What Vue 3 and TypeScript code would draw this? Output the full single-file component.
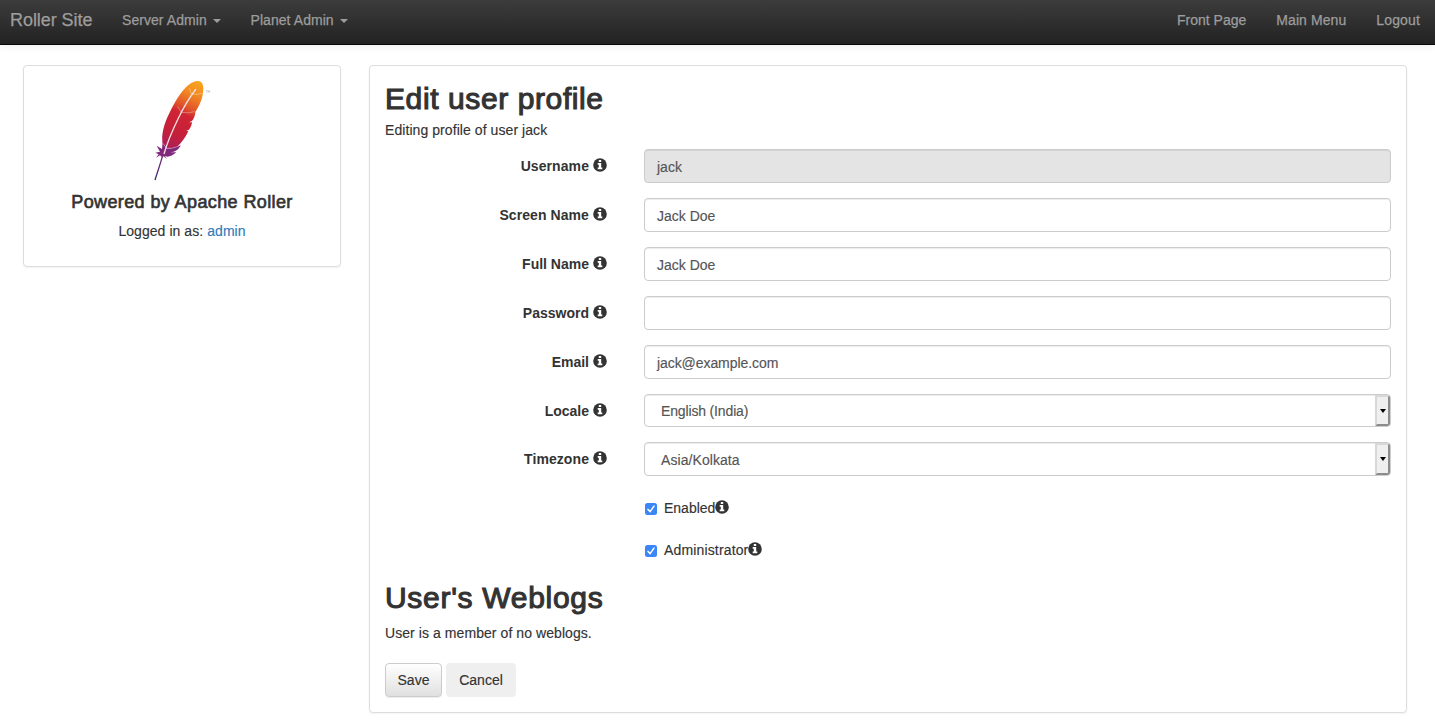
<script setup lang="ts">
import { ref, h } from 'vue'

interface Field {
  id: string
  label: string
  value: string
  kind: 'text' | 'readonly' | 'select'
}

const fields = ref<Field[]>([
  { id: 'username', label: 'Username', value: 'jack', kind: 'readonly' },
  { id: 'screenname', label: 'Screen Name', value: 'Jack Doe', kind: 'text' },
  { id: 'fullname', label: 'Full Name', value: 'Jack Doe', kind: 'text' },
  { id: 'password', label: 'Password', value: '', kind: 'text' },
  { id: 'email', label: 'Email', value: 'jack@example.com', kind: 'text' },
  { id: 'locale', label: 'Locale', value: 'English (India)', kind: 'select' },
  { id: 'timezone', label: 'Timezone', value: 'Asia/Kolkata', kind: 'select' },
])

const flags = ref([
  { id: 'enabled', label: 'Enabled', on: true },
  { id: 'administrator', label: 'Administrator', on: true },
])

const InfoIcon = () =>
  h('svg', { width: 14, height: 14, viewBox: '0 0 14 14' }, [
    h('circle', { cx: 7, cy: 7, r: 6.8, fill: '#333' }),
    h('path', { d: 'M5.8 2h2.4v1.9H5.8zM4.7 5h3.5v4.6h1.1v1.7H4.7V9.6h1.1V6.7H4.7z', fill: '#fff' }),
  ])
</script>

<template>
  <div class="page">
    <nav class="navbar">
      <a class="brand">Roller Site</a>
      <a class="item server">Server Admin <i class="caret"></i></a>
      <a class="item planet">Planet Admin <i class="caret"></i></a>
      <div class="right">
        <a class="item">Front Page</a>
        <a class="item menu">Main Menu</a>
        <a class="item logout">Logout</a>
      </div>
    </nav>

    <div class="columns">
      <aside class="panel side">
        <svg class="feather" width="84" height="116" viewBox="0 0 252 348">
          <defs>
            <linearGradient id="plume" gradientUnits="userSpaceOnUse" x1="178" y1="28" x2="80" y2="235">
              <stop offset="0" stop-color="#f9a51f" />
              <stop offset=".18" stop-color="#f28a22" />
              <stop offset=".38" stop-color="#e0532a" />
              <stop offset=".48" stop-color="#cf2433" />
              <stop offset=".75" stop-color="#c4203b" />
              <stop offset="1" stop-color="#a81f5a" />
            </linearGradient>
            <linearGradient id="quill" gradientUnits="userSpaceOnUse" x1="68" y1="251" x2="45" y2="324">
              <stop offset="0" stop-color="#85287f" />
              <stop offset="1" stop-color="#33256b" />
            </linearGradient>
          </defs>
          <path
            fill="url(#plume)"
            d="M174 27C184 27 190 36 190 50C190 74 180 98 166 120C166 130 162 140 156 147L147 151L156 151C155 160 152 167 147 173L138 177L145 177C139 193 126 210 112 224Q96 231 80 229L68 214C63 190 71 157 88 124C106 85 134 39 162 29Q168 26 174 27Z"
          />
          <path
            fill="#80287c"
            d="M68 207L71 217L80 229Q98 231 123 220C117 230 110 237 101 239L91 241L109 241C100 249 90 254 82 254L74 252L82 261L70 253L66 256L60 250L48 257L56 247L46 242L60 239L50 221L66 231Z"
          />
          <path d="M68 251C62 272 53 299 45 324" fill="none" stroke="url(#quill)" stroke-width="4" />
          <path d="M168 51C148 77 130 107 115 139C99 172 83 207 72 246" fill="none" stroke="#f6e0e2" stroke-width="4" />
          <path d="M149 49L154 66Q170 70 189 63M113 103L124 121Q145 125 164 119M68 213L80 229Q96 231 115 223" fill="none" stroke="#fff" stroke-opacity=".5" stroke-width="2" />
          <path d="M198 56H203M200.5 56V62M205 62V56L207 60L209 56V62" fill="none" stroke="#aaa" stroke-width="1.4" />
        </svg>
        <h4>Powered by Apache Roller</h4>
        <p class="who">Logged in as: <a>admin</a></p>
      </aside>

      <main class="panel main">
        <h2 class="h-edit">Edit user profile</h2>
        <p class="subtitle">Editing profile of user jack</p>

        <form class="form">
          <div v-for="f in fields" :key="f.id" class="row" :class="[f.kind, f.id]">
            <label>{{ f.label }} <InfoIcon class="info" /></label>
            <div class="control">
              <span class="value">{{ f.value }}</span>
              <span v-if="f.kind === 'select'" class="arrow"><i></i></span>
            </div>
          </div>
          <div v-for="c in flags" :key="c.id" class="check">
            <span class="box">
              <svg v-if="c.on" width="12" height="12" viewBox="0 0 12 12">
                <path d="M3 6.4L5.1 8.6L9 3.1" fill="none" stroke="#fff" stroke-width="1.5" stroke-linecap="round" />
              </svg>
            </span>
            <span :class="c.id">{{ c.label }}</span><InfoIcon class="info" />
          </div>
        </form>

        <h2 class="h-weblogs">User's Weblogs</h2>
        <p class="members">User is a member of no weblogs.</p>
        <div class="actions">
          <button class="save">Save</button>
          <button class="cancel">Cancel</button>
        </div>
      </main>
    </div>
  </div>
</template>

<style>
body {
  margin: 0;
  background: #fff;
  overflow: hidden;
}
</style>

<style scoped>
* {
  box-sizing: border-box;
}
.page {
  height: 724px;
  font: 14px/20px 'Liberation Sans', Arial, sans-serif;
  color: #333;
  white-space: nowrap;
  -webkit-text-stroke-width: 0.15px;
}
h2,
h4,
p {
  margin: 0;
  font-weight: 400;
}
.navbar {
  display: flex;
  height: 45px;
  padding: 0 15px 0 10px;
  color: #9d9d9d;
  background: linear-gradient(#3c3c3c, #222);
  border-bottom: 1px solid #080808;
  box-shadow: 0 1px 8px rgba(0, 0, 0, 0.08);
  -webkit-text-stroke-width: 0.25px;
}
.navbar a {
  padding-top: 10px;
}
.brand {
  width: 112px;
  font-size: 18px;
  letter-spacing: -0.06px;
}
.server {
  width: 128.5px;
}
.server,
.planet {
  letter-spacing: 0.06px;
}
.menu {
  letter-spacing: 0.08px;
}
.logout {
  letter-spacing: 0.15px;
}
.caret {
  display: inline-block;
  margin-left: 2px;
  vertical-align: middle;
  border: 4px solid transparent;
  border-top-color: #9d9d9d;
  border-bottom: 0;
}
.right {
  display: flex;
  gap: 30px;
  margin-left: auto;
}
.columns {
  display: flex;
  align-items: flex-start;
  gap: 28px;
  padding: 20px 28px 0 23px;
}
.panel {
  background: #fff;
  border: 1px solid #ddd;
  border-radius: 4px;
  box-shadow: 0 1px 2px rgba(0, 0, 0, 0.05);
}
.side {
  display: flex;
  flex-direction: column;
  align-items: center;
  width: 318px;
  height: 202px;
  padding-top: 6px;
}
.feather {
  display: block;
}
h4 {
  margin-top: 4px;
  font-size: 18px;
  line-height: 20px;
  letter-spacing: 0.39px;
  -webkit-text-stroke-width: 0.65px;
}
.who {
  margin-top: 9px;
  letter-spacing: 0.06px;
}
.who a {
  color: #337ab7;
}
.main {
  flex: 1;
  height: 648px;
  padding: 16px 15px 0;
}
h2 {
  font-size: 30px;
  line-height: 33px;
  -webkit-text-stroke-width: 1.1px;
}
.h-edit {
  letter-spacing: 0.6px;
}
.subtitle {
  margin-top: 5px;
  letter-spacing: 0.07px;
}
.form {
  padding-top: 9px;
}
.row {
  display: flex;
  height: 34px;
  margin-bottom: 15px;
}
.row.locale {
  height: 33px;
}
label {
  display: flex;
  justify-content: flex-end;
  gap: 4px;
  width: 222px;
  padding-top: 7px;
  font-weight: 700;
  -webkit-text-stroke-width: 0;
}
.username label,
.screenname label,
.timezone label {
  letter-spacing: 0.08px;
}
.info {
  flex: none;
  margin-top: 2px;
}
.control {
  display: flex;
  width: 747px;
  margin-left: 37px;
  padding: 7px 0 0 12px;
  color: #555;
  border: 1px solid #ccc;
  border-radius: 4px;
  box-shadow: inset 0 1px 1px rgba(0, 0, 0, 0.075);
}
.readonly .control {
  background: #e4e4e4;
}
.email .value {
  letter-spacing: -0.07px;
}
.select .control {
  justify-content: space-between;
  padding: 0 0 0 16px;
}
.select .value {
  padding-top: 6px;
}
.locale .value {
  letter-spacing: -0.15px;
}
.timezone .value {
  padding-top: 7px;
  letter-spacing: 0.07px;
}
.arrow {
  display: flex;
  align-items: center;
  justify-content: center;
  width: 15px;
  background: #efefef;
  border: 2px solid #d8d8d8;
  border-right-color: #8c8c8c;
  border-bottom-color: #8c8c8c;
  border-radius: 0 3px 3px 0;
}
.arrow i {
  border: 3.5px solid transparent;
  border-top: 4px solid #000;
  border-bottom: 0;
}
.check {
  display: flex;
  height: 27px;
  margin: 0 0 15px 260px;
  padding-top: 7px;
}
.administrator {
  letter-spacing: 0.15px;
}
.box {
  width: 12px;
  height: 12px;
  margin: 5px 7px 0 0;
  background: #3b86f7;
  border-radius: 2.5px;
}
.box svg {
  display: block;
}
.h-weblogs {
  margin-top: 21px;
  letter-spacing: 0.7px;
}
.members {
  margin-top: 9px;
  letter-spacing: 0.07px;
}
.actions {
  display: flex;
  gap: 4px;
  margin-top: 20px;
}
button {
  height: 34px;
  padding: 0;
  font: inherit;
  color: #333;
  border: 0;
  border-radius: 4px;
}
.save {
  width: 57px;
  background: linear-gradient(#fff, #e0e0e0);
  border: 1px solid #ccc;
  box-shadow: 0 1px 1px rgba(0, 0, 0, 0.075);
}
.cancel {
  width: 70px;
  background: #efefef;
}
</style>
